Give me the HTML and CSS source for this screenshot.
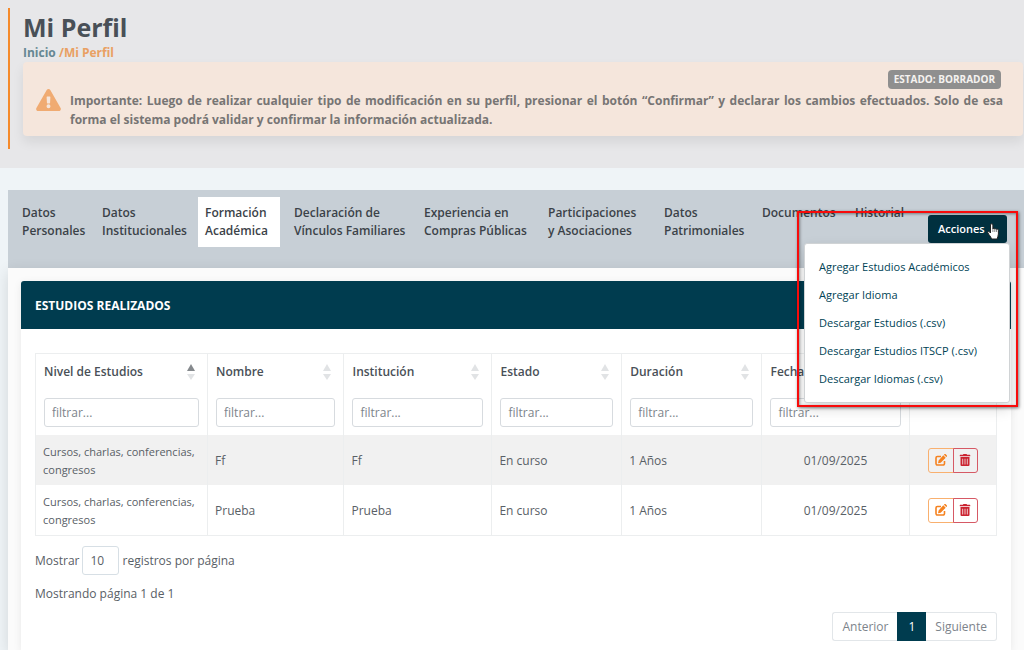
FILE: index.html
```html
<!DOCTYPE html>
<html lang="es">
    <head>
        <title>Mi Perfil</title>
        <meta charset="UTF-8">
        <meta name="viewport" content="width=device-width, initial-scale=1.0">
        <link rel="stylesheet" href="styles.css">
    </head>
    <body>
        <!-- shared icons -->
        <svg class="sprite" aria-hidden="true">
            <symbol id="edit" viewBox="0 0 12 12">
                <path class="box" d="M6 2.500H2.400A1.400 1.400 0 0 0 1 3.900v5.700A1.400 1.400 0 0 0 2.400 11h5.700A1.400 1.400 0 0 0 9.500 9.600V7"/>
                <path d="M8.300 1.300l2.400 2.400-5 5-2.700.6.600-2.900zM8.900.7l.4-.4a1.100 1.100 0 0 1 1.500 0l.9.900a1.100 1.100 0 0 1 0 1.500l-.4.400z"/>
            </symbol>
            <symbol id="trash" viewBox="0 0 448 512">
                <path fill-rule="evenodd" d="M32 464a48 48 0 0 0 48 48h288a48 48 0 0 0 48-48V128H32zm272-256a16 16 0 0 1 32 0v224a16 16 0 0 1-32 0zm-96 0a16 16 0 0 1 32 0v224a16 16 0 0 1-32 0zm-96 0a16 16 0 0 1 32 0v224a16 16 0 0 1-32 0zM432 32H312l-9.400-18.700A24 24 0 0 0 281.100 0H166.800a23.700 23.700 0 0 0-21.400 13.300L136 32H16A16 16 0 0 0 0 48v32a16 16 0 0 0 16 16h416a16 16 0 0 0 16-16V48a16 16 0 0 0-16-16z"/>
            </symbol>
            <symbol id="sort" viewBox="0 0 8 18">
                <path class="up" d="M4 1l4 7H0z"/>
                <path class="down" d="M4 17l4-6H0z"/>
            </symbol>
        </svg>

        <header class="top">
            <div class="heading">
                <h1>Mi Perfil</h1>
                <p class="breadcrumb"><a href="#">Inicio</a> <span>/Mi Perfil</span></p>
                <div class="alert">
                    <span class="badge">ESTADO: BORRADOR</span>
                    <div class="alert-body">
                        <svg class="warning" viewBox="0 0 576 512" aria-hidden="true">
                            <path fill-rule="evenodd" d="M569.500 440C588 472 564.800 512 527.900 512H48.100c-36.900 0-60-40.100-41.600-72L246.400 24c18.500-32 64.700-32 83.200 0zM288 354a46 46 0 1 0 0 92 46 46 0 0 0 0-92zm-43.700-165.300l7.400 136c.4 6.400 5.600 11.300 12 11.300h48.600c6.400 0 11.600-4.900 12-11.300l7.400-136c.4-6.900-5.100-12.700-12-12.700h-63.400c-6.900 0-12.400 5.800-12 12.700z"/>
                        </svg>
                        <p>Importante: Luego de realizar cualquier tipo de modificación en su perfil, presionar el botón “Confirmar” y declarar los cambios efectuados. Solo de esa forma el sistema podrá validar y confirmar la información actualizada.</p>
                    </div>
                </div>
            </div>
        </header>

        <main class="profile">
            <div class="navbar">
                <nav class="tabs">
                    <a href="#">Datos<br>Personales</a>
                    <a href="#">Datos<br>Institucionales</a>
                    <a href="#" class="active">Formación<br>Académica</a>
                    <a href="#">Declaración de<br>Vínculos Familiares</a>
                    <a href="#">Experiencia en<br>Compras Públicas</a>
                    <a href="#">Participaciones<br>y Asociaciones</a>
                    <a href="#">Datos<br>Patrimoniales</a>
                    <a href="#">Documentos</a>
                    <a href="#">Historial</a>
                </nav>
                <div class="actions">
                    <button type="button" class="btn-actions">Acciones</button>
                    <div class="menu">
                        <a href="#">Agregar Estudios Académicos</a>
                        <a href="#">Agregar Idioma</a>
                        <a href="#">Descargar Estudios (.csv)</a>
                        <a href="#">Descargar Estudios ITSCP (.csv)</a>
                        <a href="#">Descargar Idiomas (.csv)</a>
                    </div>
                    <div class="highlight"></div>
                    <svg class="pointer" viewBox="0 0 12 17" aria-hidden="true">
                        <path d="M3.500 10V2a1.200 1.200 0 0 1 2.400 0v4a1 1 0 0 1 1.900.2 1 1 0 0 1 1.800.4 1 1 0 0 1 1.800.7V11c0 2-1 3-1.200 5H4.500C4 13.500 1.800 12 .8 9.600.4 8.500 1.700 8 2.300 8.700z"/>
                        <path class="lines" d="M5.900 6v3M7.800 6.300V9M9.600 6.700V9"/>
                    </svg>
                </div>
            </div>

            <div class="outer">
                <section class="card">
                    <h2>ESTUDIOS REALIZADOS</h2>
                    <div class="card-body">
                        <table>
                            <colgroup>
                                <col class="c-level"><col class="c-name"><col class="c-inst"><col class="c-state"><col class="c-time"><col class="c-date"><col class="c-btn">
                            </colgroup>
                            <thead>
                                <tr class="titles">
                                    <th><div>Nivel de Estudios <svg class="sort asc"><use href="#sort"/></svg></div></th>
                                    <th><div>Nombre <svg class="sort"><use href="#sort"/></svg></div></th>
                                    <th><div>Institución <svg class="sort"><use href="#sort"/></svg></div></th>
                                    <th><div>Estado <svg class="sort"><use href="#sort"/></svg></div></th>
                                    <th><div>Duración <svg class="sort"><use href="#sort"/></svg></div></th>
                                    <th><div>Fecha <svg class="sort"><use href="#sort"/></svg></div></th>
                                    <th></th>
                                </tr>
                                <tr class="filters">
                                    <td><input type="text" placeholder="filtrar..." aria-label="Nivel de Estudios"></td>
                                    <td><input type="text" placeholder="filtrar..." aria-label="Nombre"></td>
                                    <td><input type="text" placeholder="filtrar..." aria-label="Institución"></td>
                                    <td><input type="text" placeholder="filtrar..." aria-label="Estado"></td>
                                    <td><input type="text" placeholder="filtrar..." aria-label="Duración"></td>
                                    <td><input type="text" placeholder="filtrar..." aria-label="Fecha"></td>
                                    <td></td>
                                </tr>
                            </thead>
                            <tbody>
                                <tr>
                                    <td class="level">Cursos, charlas, conferencias, congresos</td>
                                    <td>Ff</td>
                                    <td>Ff</td>
                                    <td>En curso</td>
                                    <td>1 Años</td>
                                    <td class="center">01/09/2025</td>
                                    <td class="buttons">
                                        <div class="group">
                                            <button type="button" class="edit" aria-label="Editar"><svg><use href="#edit"/></svg></button>
                                            <button type="button" class="delete" aria-label="Eliminar"><svg><use href="#trash"/></svg></button>
                                        </div>
                                    </td>
                                </tr>
                                <tr>
                                    <td class="level">Cursos, charlas, conferencias, congresos</td>
                                    <td>Prueba</td>
                                    <td>Prueba</td>
                                    <td>En curso</td>
                                    <td>1 Años</td>
                                    <td class="center">01/09/2025</td>
                                    <td class="buttons">
                                        <div class="group">
                                            <button type="button" class="edit" aria-label="Editar"><svg><use href="#edit"/></svg></button>
                                            <button type="button" class="delete" aria-label="Eliminar"><svg><use href="#trash"/></svg></button>
                                        </div>
                                    </td>
                                </tr>
                            </tbody>
                        </table>

                        <div class="length">
                            <label for="length">Mostrar</label>
                            <select id="length"><option>10</option></select>
                            <span>registros por página</span>
                        </div>
                        <p class="info">Mostrando página 1 de 1</p>
                        <nav class="pagination">
                            <a href="#">Anterior</a>
                            <a href="#" class="current">1</a>
                            <a href="#">Siguiente</a>
                        </nav>
                    </div>
                </section>
            </div>
        </main>
    </body>
</html>
```
FILE: styles.css
```css
*
{
    box-sizing: border-box;
}
body
{
    margin: 0;
    min-height: 100vh;
    display: flex;
    flex-direction: column;
    background-color: #eff4f7;
    color: #596066;
    font-family: "Open Sans", "Noto Sans", sans-serif;
    font-size: 12px;
    line-height: 18px;
}
h1, h2, p
{
    margin: 0;
}
a
{
    color: inherit;
    text-decoration: none;
}
button, input, select
{
    font: inherit;
    color: inherit;
    margin: 0;
}
.sprite
{
    display: none;
}

/* page heading */
.top
{
    padding: 8px 0 19px 8px;
    background-color: #e7e7e9;
}
.heading
{
    border-left: 2px solid #f58a2b;
    padding: 2px 1px 13px 13px;
}
h1
{
    color: #495057;
    font-size: 25px;
    line-height: 34px;
}
.breadcrumb
{
    margin-bottom: 1px;
    color: #e9a063;
    font-weight: bold;
    line-height: 17px;
}
.breadcrumb a
{
    color: #668793;
}
.alert
{
    display: flex;
    flex-direction: column;
    padding: 8px 20px 7px 13px;
    border-radius: 4px;
    background-color: #f5e6dc;
    box-shadow: 0 6px 12px rgba(0, 0, 0, 0.08);
}
.badge
{
    align-self: flex-end;
    margin-right: 2px;
    padding: 0 6px;
    border-radius: 4px;
    background-color: #8f8f8f;
    color: #f5f2f0;
    font-size: 10px;
    font-weight: bold;
    line-height: 19px;
}
.alert-body
{
    display: flex;
    gap: 9px;
    color: #777574;
    font-weight: bold;
    line-height: 19px;
    text-align: justify;
}
.alert-body p
{
    flex: 1;
    padding-top: 2px;
}
.warning
{
    width: 25px;
    height: 22px;
    fill: #f0ab72;
}

/* tabs */
.profile
{
    flex: 1;
    display: flex;
    flex-direction: column;
    margin: 22px 0 0 8px;
}
.navbar
{
    display: flex;
    justify-content: space-between;
    min-height: 78px;
    padding: 7px 17px 0 7px;
    background-color: #c7cfd6;
}
.tabs
{
    flex: 1;
    display: grid;
    grid-template-columns: 73fr 96fr 82fr 123fr 117fr 109fr 91fr 86fr 69fr;
    gap: 7px;
    align-items: start;
    color: #3b4248;
    font-weight: 600;
    white-space: nowrap;
}
.tabs a
{
    padding: 7px 0 7px 7px;
}
.tabs .active
{
    background-color: #fff;
}
.actions
{
    position: relative;
    margin-left: 11px;
    padding-top: 18px;
}
.btn-actions
{
    width: 79px;
    height: 28px;
    padding: 0 24px 0 10px;
    border: 0;
    border-radius: 3px;
    background-color: #00303f;
    color: #fff;
    font-size: 11px;
    font-weight: 600;
    text-align: left;
}
.menu
{
    position: absolute;
    z-index: 1;
    top: 46px;
    right: -3px;
    display: flex;
    flex-direction: column;
    width: 206px;
    padding: 9px 14px;
    border: 1px solid #d0d3d5;
    border-radius: 3px;
    background-color: #fff;
    color: #004355;
    box-shadow: 0 6px 14px rgba(0, 0, 0, 0.15);
    font-size: 11px;
    font-weight: 500;
    line-height: 28px;
    white-space: nowrap;
}
.highlight
{
    position: absolute;
    z-index: 2;
    top: 14px;
    right: -11px;
    width: 221px;
    height: 196px;
    border: 2px solid #f80b0b;
    box-shadow: 1px 1px 3px rgba(0, 0, 0, 0.5), inset 1px 1px 3px rgba(0, 0, 0, 0.4);
}
.pointer
{
    position: absolute;
    z-index: 3;
    top: 26px;
    right: 8px;
    width: 12px;
    height: 17px;
    fill: #fff;
    stroke: #222;
    stroke-width: 1;
}
.pointer .lines
{
    fill: none;
    stroke: #888;
}

/* card */
.outer
{
    flex: 1;
    display: flex;
    padding: 13px 13px 0;
    background-color: #fbfbfb;
    box-shadow: 0 4px 14px rgba(0, 0, 0, 0.12);
}
.card
{
    flex: 1;
    min-width: 0;
    border-radius: 3px 3px 0 0;
    background-color: #fff;
    box-shadow: 0 2px 8px rgba(0, 0, 0, 0.08);
}
h2
{
    padding: 1px 14px 0;
    border-radius: 3px 3px 0 0;
    background-color: #003c4f;
    color: #fff;
    font-size: 12px;
    line-height: 47px;
}
.card-body
{
    padding: 24px 14px 9px;
}
table
{
    width: 100%;
    table-layout: fixed;
    border-collapse: collapse;
    border: 1px solid #eceeef;
}
.c-level { width: 17.9%; }
.c-name { width: 14.2%; }
.c-inst { width: 15.4%; }
.c-state { width: 13.5%; }
.c-time { width: 14.6%; }
.c-date { width: 15.3%; }
.c-btn { width: 9.1%; }
th, td
{
    border-left: 1px solid #eceeef;
    border-right: 1px solid #eceeef;
    text-align: left;
}
th
{
    padding: 9px 8px;
    color: #495057;
    font-weight: 600;
}
th div
{
    display: flex;
    justify-content: space-between;
    align-items: center;
    padding-right: 4px;
}
.sort
{
    --up: #e1e3e5;
    width: 8px;
    height: 18px;
}
.asc
{
    --up: #85898d;
}
.up
{
    fill: var(--up);
}
.down
{
    fill: #e1e3e5;
}
.filters td
{
    padding: 8px;
}
.filters input
{
    display: block;
    width: 100%;
    height: 29px;
    padding: 0 7px;
    border: 1px solid #d7dbdf;
    border-radius: 3px;
    background-color: #fff;
}
.filters input::placeholder
{
    color: #7d848b;
}
tbody tr
{
    height: 50px;
}
tbody tr:first-child
{
    background-color: #f1f1f1;
}
tbody td
{
    padding: 8px 0 6px 7px;
}
tbody .level
{
    font-size: 11px;
}
tbody .center
{
    padding-left: 0;
    text-align: center;
}
tbody .buttons
{
    padding: 0;
}
.group
{
    display: flex;
    justify-content: center;
}
.group button
{
    display: flex;
    align-items: center;
    justify-content: center;
    width: 26px;
    height: 25px;
    padding: 0;
    border: 1px solid #f9b06f;
    border-radius: 3px 0 0 3px;
    background-color: transparent;
    fill: #f58220;
}
.group .delete
{
    width: 25px;
    margin-left: -1px;
    border-color: #d65965;
    border-radius: 0 3px 3px 0;
    fill: #cb2431;
}
.group svg
{
    width: 12px;
    height: 12px;
}
.box
{
    fill: none;
    stroke: #f58220;
    stroke-width: 1.6;
}

/* table footer */
.length
{
    display: flex;
    align-items: center;
    gap: 3px;
    margin-top: 10px;
}
.length select
{
    appearance: none;
    width: 37px;
    height: 29px;
    padding: 0 7px;
    border: 1px solid #d7dfe5;
    border-radius: 3px;
    background-color: #fff;
}
.info
{
    margin-top: 10px;
}
.pagination
{
    display: flex;
    justify-content: flex-end;
    margin-top: 9px;
    color: #7d848b;
    line-height: 27px;
}
.pagination a
{
    padding: 0 9px;
    border: 1px solid #e2e6e9;
}
.pagination a:first-child
{
    border-right: 0;
    border-radius: 3px 0 0 3px;
}
.pagination a:last-child
{
    border-left: 0;
    border-radius: 0 3px 3px 0;
}
.pagination .current
{
    padding: 0 10px;
    border-color: #003c4f;
    background-color: #003c4f;
    color: #fff;
}
```
